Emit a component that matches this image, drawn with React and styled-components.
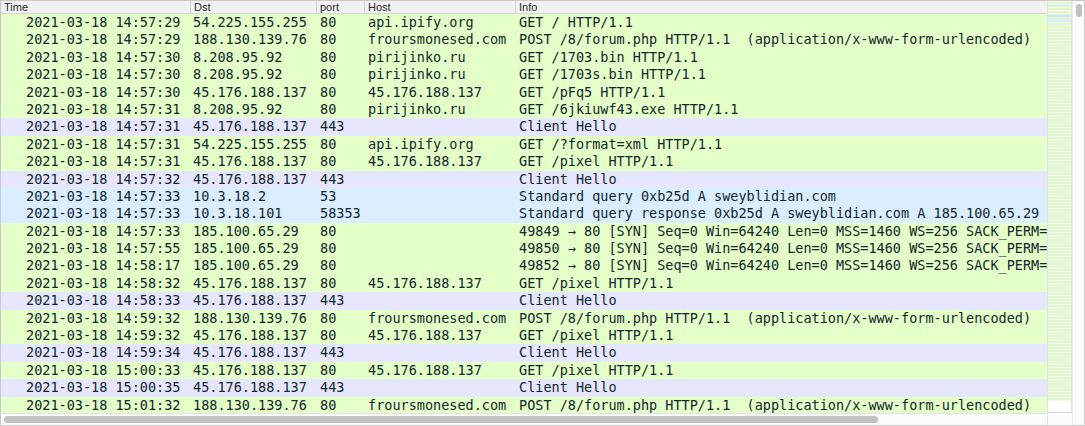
import React from 'react';
import styled, { createGlobalStyle } from 'styled-components';

const Global = createGlobalStyle`
  html, body { margin: 0; padding: 0; background: #fff; }
`;

const COLS = '189px 126px 48px 151px 1fr';

const COLORS = {
  http: '#e4ffc7',
  tls: '#e7e6ff',
  dns: '#daeeff',
};

const Frame = styled.div`
  width: 1085px;
  height: 426px;
  box-sizing: border-box;
  border: 1px solid #c9c9c9;
  display: flex;
  overflow: hidden;
  background: #fff;
`;

const LeftCol = styled.div`
  flex: 1;
  min-width: 0;
  display: flex;
  flex-direction: column;
`;

const Table = styled.div`
  flex: 1;
  overflow: hidden;
`;

const Header = styled.div`
  display: grid;
  grid-template-columns: ${COLS};
  height: 12px;
  background: #f1f1f1;
  border-bottom: 1px solid #d6d6d6;
  font-family: 'Liberation Sans', Arial, sans-serif;
  font-size: 11px;
  line-height: 12px;
  color: #2b2b2b;
`;

const HeadCell = styled.div`
  padding-left: ${p => (p.$first ? '3px' : '3px')};
  border-left: ${p => (p.$first ? 'none' : '1px solid #d2d2d2')};
  white-space: nowrap;
  overflow: hidden;
`;

const Row = styled.div`
  display: grid;
  grid-template-columns: ${COLS};
  height: 17.4px;
  background: ${p => COLORS[p.$kind]};
  font-family: 'DejaVu Sans Mono', 'Liberation Mono', monospace;
  font-size: 13.5px;
  line-height: 17.4px;
  color: #12272e;
`;

const Cell = styled.div`
  white-space: pre;
  overflow: hidden;
  padding-left: ${p => p.$pad || 4}px;
`;

const HScroll = styled.div`
  height: 12px;
  border-top: 1px solid #e3e3e3;
  background: #fafafa;
  padding: 2px 0 0 3px;
  box-sizing: border-box;
`;

const HThumb = styled.div`
  width: 874px;
  height: 7px;
  border-radius: 4px;
  background: #c2c2c2;
`;

const Minimap = styled.div`
  width: 24px;
  display: flex;
  flex-direction: column;
  border-left: 1px solid #e2e2e2;
`;

const MapBody = styled.div`
  flex: 1;
  border-bottom: 1px solid #d9d9d9;
  border-right: 1px solid #e4e4e4;
  overflow: hidden;
`;

const MapCorner = styled.div`
  height: 12px;
  background: #fbfbfb;
`;

const VScroll = styled.div`
  width: 12px;
  background: #fafafa;
  border-left: 1px solid #ececec;
  padding: 3px 0 0 3px;
  box-sizing: border-box;
`;

const VThumb = styled.div`
  width: 6px;
  height: 13px;
  border-radius: 3px;
  background: #c2c2c2;
`;

const POST = 'POST /8/forum.php HTTP/1.1  (application/x-www-form-urlencoded)';
const SYN = n => `${n} → 80 [SYN] Seq=0 Win=64240 Len=0 MSS=1460 WS=256 SACK_PERM=1`;

const rows = [
  ['14:57:29', '54.225.155.255', '80', 'api.ipify.org', 'GET / HTTP/1.1', 'http'],
  ['14:57:29', '188.130.139.76', '80', 'froursmonesed.com', POST, 'http'],
  ['14:57:30', '8.208.95.92', '80', 'pirijinko.ru', 'GET /1703.bin HTTP/1.1', 'http'],
  ['14:57:30', '8.208.95.92', '80', 'pirijinko.ru', 'GET /1703s.bin HTTP/1.1', 'http'],
  ['14:57:30', '45.176.188.137', '80', '45.176.188.137', 'GET /pFq5 HTTP/1.1', 'http'],
  ['14:57:31', '8.208.95.92', '80', 'pirijinko.ru', 'GET /6jkiuwf43.exe HTTP/1.1', 'http'],
  ['14:57:31', '45.176.188.137', '443', '', 'Client Hello', 'tls'],
  ['14:57:31', '54.225.155.255', '80', 'api.ipify.org', 'GET /?format=xml HTTP/1.1', 'http'],
  ['14:57:31', '45.176.188.137', '80', '45.176.188.137', 'GET /pixel HTTP/1.1', 'http'],
  ['14:57:32', '45.176.188.137', '443', '', 'Client Hello', 'tls'],
  ['14:57:33', '10.3.18.2', '53', '', 'Standard query 0xb25d A sweyblidian.com', 'dns'],
  ['14:57:33', '10.3.18.101', '58353', '', 'Standard query response 0xb25d A sweyblidian.com A 185.100.65.29', 'dns'],
  ['14:57:33', '185.100.65.29', '80', '', SYN(49849), 'http'],
  ['14:57:55', '185.100.65.29', '80', '', SYN(49850), 'http'],
  ['14:58:17', '185.100.65.29', '80', '', SYN(49852), 'http'],
  ['14:58:32', '45.176.188.137', '80', '45.176.188.137', 'GET /pixel HTTP/1.1', 'http'],
  ['14:58:33', '45.176.188.137', '443', '', 'Client Hello', 'tls'],
  ['14:59:32', '188.130.139.76', '80', 'froursmonesed.com', POST, 'http'],
  ['14:59:32', '45.176.188.137', '80', '45.176.188.137', 'GET /pixel HTTP/1.1', 'http'],
  ['14:59:34', '45.176.188.137', '443', '', 'Client Hello', 'tls'],
  ['15:00:33', '45.176.188.137', '80', '45.176.188.137', 'GET /pixel HTTP/1.1', 'http'],
  ['15:00:35', '45.176.188.137', '443', '', 'Client Hello', 'tls'],
  ['15:01:32', '188.130.139.76', '80', 'froursmonesed.com', POST, 'http'],
];

// thin coloured strips in the overview column
function MapStrips() {
  const lines = [];
  for (let y = 0; y < 400; y += 3) {
    lines.push(<rect key={y} x="0" y={y} width="23" height="1" fill="#eefbe4" />);
  }
  return (
    <svg width="23" height="400" style={{ display: 'block' }}>
      <rect x="0" y="0" width="23" height="400" fill="#e2f6d2" />
      {lines}
      <rect x="0" y="4" width="23" height="1" fill="#d3e9f5" />
      <rect x="0" y="14" width="23" height="2" fill="#cfe4f5" />
      <rect x="0" y="18" width="23" height="3" fill="#d8ecfa" />
    </svg>
  );
}

export default function App() {
  return (
    <>
      <Global />
      <Frame>
        <LeftCol>
          <Table>
            <Header>
              <HeadCell $first>Time</HeadCell>
              <HeadCell>Dst</HeadCell>
              <HeadCell>port</HeadCell>
              <HeadCell>Host</HeadCell>
              <HeadCell>Info</HeadCell>
            </Header>
            {rows.map((r, i) => (
              <Row key={i} $kind={r[5]}>
                <Cell $pad={25}>{`2021-03-18 ${r[0]}`}</Cell>
                <Cell $pad={3}>{r[1]}</Cell>
                <Cell>{r[2]}</Cell>
                <Cell>{r[3]}</Cell>
                <Cell>{r[4]}</Cell>
              </Row>
            ))}
          </Table>
          <HScroll>
            <HThumb />
          </HScroll>
        </LeftCol>
        <Minimap>
          <MapBody>
            <MapStrips />
          </MapBody>
          <MapCorner />
        </Minimap>
        <VScroll>
          <VThumb />
        </VScroll>
      </Frame>
    </>
  );
}
